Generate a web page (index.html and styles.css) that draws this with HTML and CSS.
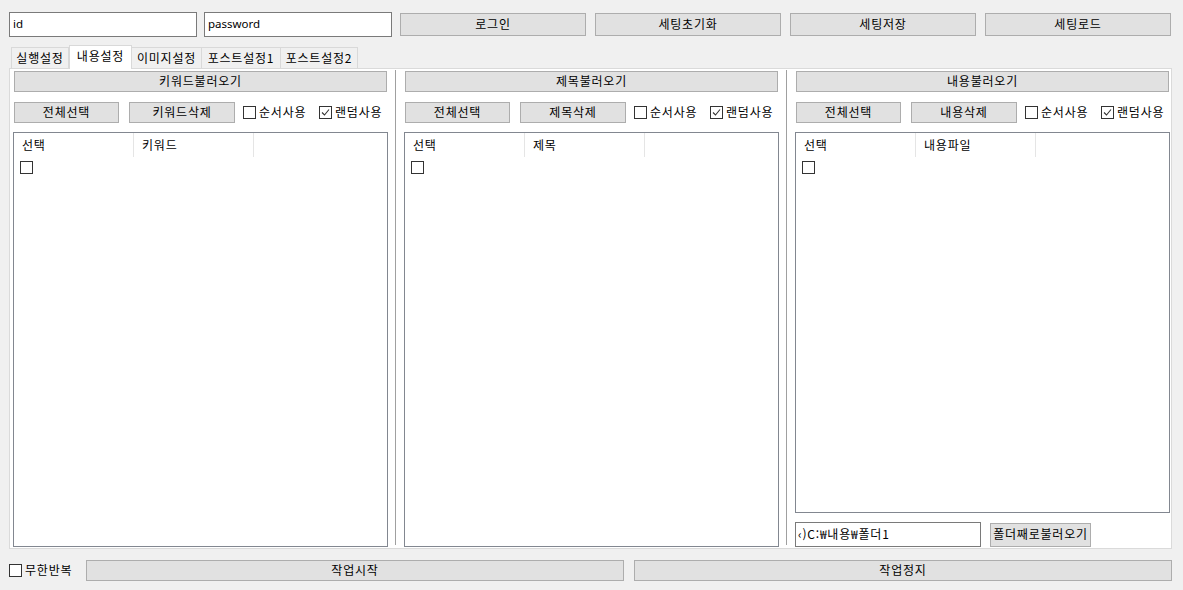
FILE: index.html
```html
<!DOCTYPE html>
<html lang="ko">
<head>
  <meta charset="UTF-8" />
  <title>설정</title>
  <link rel="stylesheet" href="styles.css">
</head>
<body>
  <div class="topbar">
    <input class="field latin" type="text" value="id" />
    <input class="field latin" type="text" value="password" />
    <button class="btn top-btn first">로그인</button>
    <button class="btn top-btn">세팅초기화</button>
    <button class="btn top-btn">세팅저장</button>
    <button class="btn top-btn">세팅로드</button>
  </div>

  <div class="tabs">
    <div class="tab t1">실행설정</div>
    <div class="tab t2 active">내용설정</div>
    <div class="tab t3">이미지설정</div>
    <div class="tab t4">포스트설정1</div>
    <div class="tab t5">포스트설정2</div>
  </div>

  <div class="panel">
    <div class="col">
      <button class="btn load">키워드불러오기</button>
      <div class="row">
        <button class="btn sel-all">전체선택</button>
        <button class="btn del">키워드삭제</button>
        <span class="check first-check"><span class="box"></span>순서사용</span>
        <span class="check"><span class="box checked"><svg viewBox="0 0 11 11" width="11" height="11"><path d="M2 5.5 L4.5 8 L9 2.5" fill="none" stroke="#333" stroke-width="1.1"/></svg></span>랜덤사용</span>
      </div>
      <div class="list">
        <div class="list-head">
          <div class="hcell">선택</div>
          <div class="hcell">키워드</div>
        </div>
        <span class="box item-box"></span>
      </div>
    </div>

    <div class="sep"></div>

    <div class="col">
      <button class="btn load">제목불러오기</button>
      <div class="row">
        <button class="btn sel-all">전체선택</button>
        <button class="btn del">제목삭제</button>
        <span class="check first-check"><span class="box"></span>순서사용</span>
        <span class="check"><span class="box checked"><svg viewBox="0 0 11 11" width="11" height="11"><path d="M2 5.5 L4.5 8 L9 2.5" fill="none" stroke="#333" stroke-width="1.1"/></svg></span>랜덤사용</span>
      </div>
      <div class="list">
        <div class="list-head">
          <div class="hcell">선택</div>
          <div class="hcell">제목</div>
        </div>
        <span class="box item-box"></span>
      </div>
    </div>

    <div class="sep"></div>

    <div class="col">
      <button class="btn load">내용불러오기</button>
      <div class="row">
        <button class="btn sel-all">전체선택</button>
        <button class="btn del">내용삭제</button>
        <span class="check first-check"><span class="box"></span>순서사용</span>
        <span class="check"><span class="box checked"><svg viewBox="0 0 11 11" width="11" height="11"><path d="M2 5.5 L4.5 8 L9 2.5" fill="none" stroke="#333" stroke-width="1.1"/></svg></span>랜덤사용</span>
      </div>
      <div class="list">
        <div class="list-head">
          <div class="hcell">선택</div>
          <div class="hcell">내용파일</div>
        </div>
        <span class="box item-box"></span>
      </div>
      <div class="folder-row">
        <input class="field path" type="text" value="‹)C:₩내용₩폴더1" />
        <button class="btn folder-btn">폴더째로불러오기</button>
      </div>
    </div>
  </div>

  <div class="footer">
    <span class="check loop"><span class="box"></span>무한반복</span>
    <button class="btn run">작업시작</button>
    <button class="btn run stop">작업정지</button>
  </div>
</body>
</html>
```

FILE: styles.css
```css
* { box-sizing: border-box; }
body { margin: 0; width: 1183px; height: 590px; overflow: hidden; background: #f0f0f0; color: #000; font-family: "Noto Sans CJK KR", "Noto Sans", sans-serif; font-size: 12px; line-height: 16px; letter-spacing: 0.8px; }

.btn { background: #e1e1e1; border: 1px solid #adadad; font: inherit; letter-spacing: inherit; color: #000; padding: 0 0 2px 0; margin: 0; }
.field { height: 25px; border: 1px solid #7a7a7a; background: #fff; font: inherit; letter-spacing: inherit; color: #000; padding: 0 3px 2px 3px; margin: 0; outline: none; }
.field.latin { letter-spacing: 0; font-family: "Noto Sans", sans-serif; font-size: 11.5px; }

.topbar { display: flex; align-items: flex-start; padding: 12px 0 0 9px; height: 37px; }
.topbar .field { width: 188px; }
.topbar .field + .field { margin-left: 7px; }
.top-btn { width: 186px; height: 23px; margin: 1px 0 0 9px; }
.top-btn.first { margin-left: 8px; }

.tabs { display: flex; align-items: flex-end; height: 31px; padding: 8px 0 0 11px; }
.tab { height: 21px; border: 1px solid #d9d9d9; border-bottom: none; background: #f0f0f0; text-align: center; line-height: 20px; }
.tab + .tab { border-left: none; }
.tab.active { height: 24px; background: #fff; border: 1px solid #d9d9d9; border-bottom: none; margin-bottom: -1px; line-height: 19px; position: relative; z-index: 1; }
.t1 { width: 58px; }
.t2 { width: 63px; }
.t3 { width: 70px; }
.t4 { width: 79px; }
.t5 { width: 77px; }

.panel { display: flex; width: 1163px; height: 481px; margin-left: 9px; padding: 2px 0 1px 3px; background: #fff; border: 1px solid #dadada; }
.col { width: 375px; display: flex; flex-direction: column; }
.sep { width: 1px; background: #a0a0a0; margin: -1px 8px 2px 7px; }

.load { height: 21px; margin: 0 1px; }
.row { display: flex; align-items: center; height: 21px; margin-top: 10px; }
.sel-all { width: 105px; height: 21px; margin-left: 1px; }
.del { width: 106px; height: 21px; margin-left: 10px; }

.check { display: flex; align-items: center; white-space: nowrap; padding-bottom: 1px; }
.first-check { width: 76px; margin-left: 8px; }
.box { display: inline-flex; align-items: center; justify-content: center; width: 13px; height: 13px; border: 1px solid #333; background: #fff; margin-right: 3px; flex: none; }

.list { flex: 1; margin-top: 9px; border: 1px solid #828790; background: #fff; }
.list-head { display: flex; height: 25px; }
.hcell { width: 120px; height: 24px; padding: 0 0 1px 8px; line-height: 23px; border-right: 1px solid #e5e5e5; }
.item-box { margin: 3px 0 0 6px; }

.folder-row { display: flex; align-items: center; height: 25px; margin-top: 9px; }
.path { width: 186px; padding-left: 2px; }
.folder-btn { width: 101px; height: 24px; margin-left: 9px; }

.footer { display: flex; align-items: center; height: 21px; margin-top: 11px; padding-left: 9px; }
.loop { width: 77px; }
.run { width: 538px; height: 21px; }
.stop { margin-left: 10px; }
```
